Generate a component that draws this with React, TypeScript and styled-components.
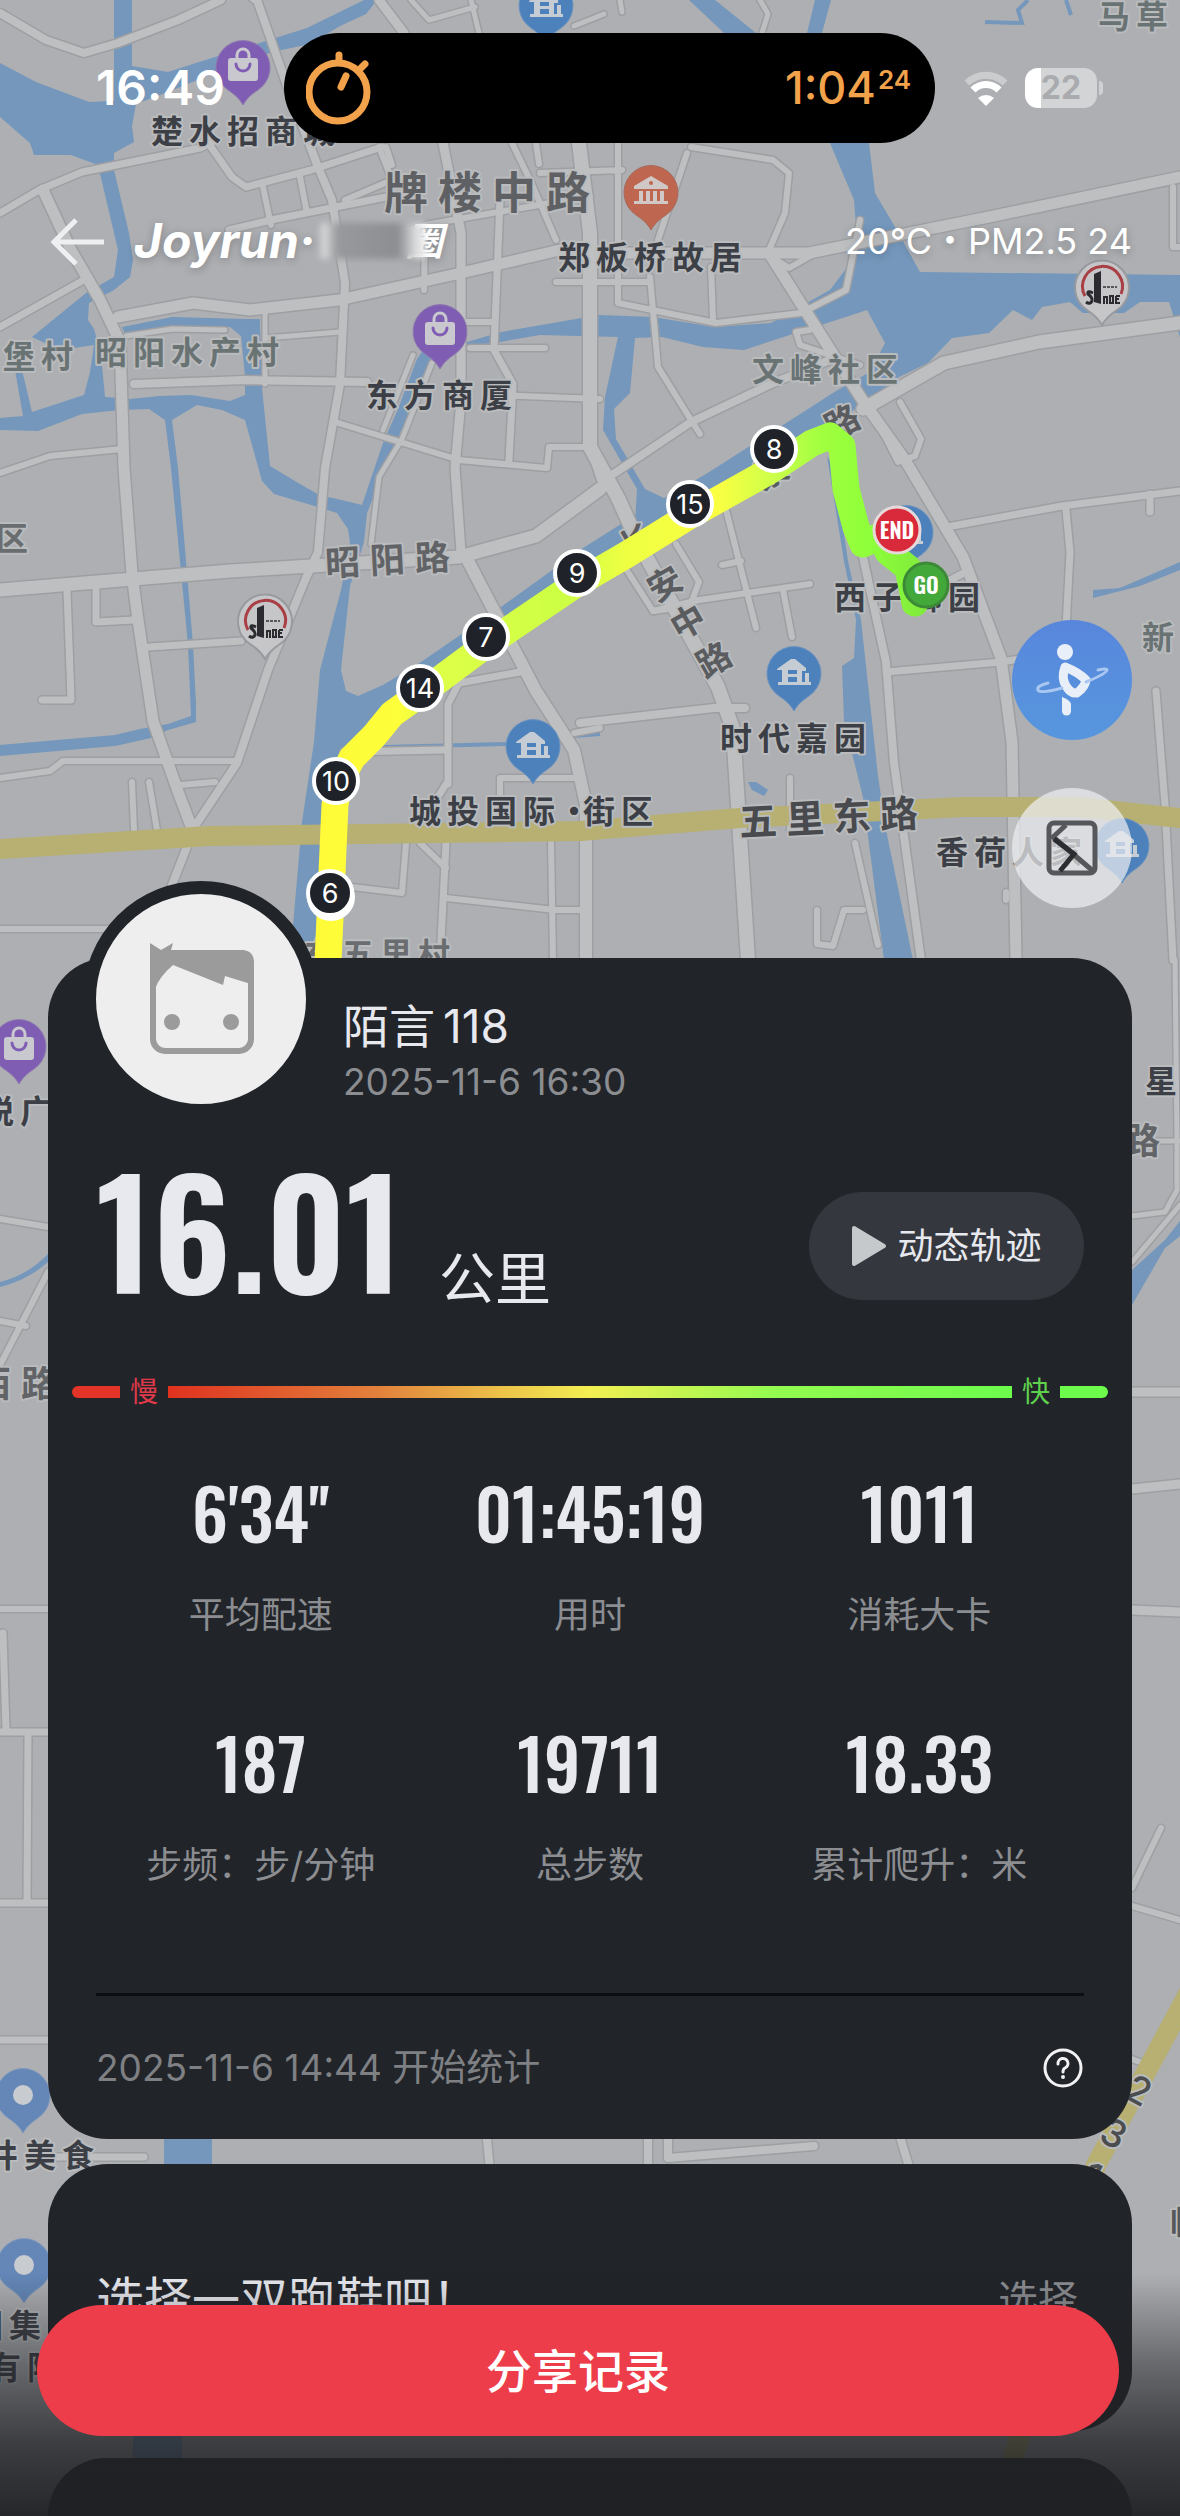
import React from 'react';
import styled, { createGlobalStyle } from 'styled-components';

const CJK = '"Noto Sans CJK SC", sans-serif';
const UI = `Inter, ${CJK}`;
const NUM = `Oswald, "Roboto Condensed", Roboto, ${CJK}`;

const C = {
  card: '#212429',
  bright: '#e8e9ef',
  muted: '#8b8d91',
  red: '#ee3d4a',
  water: '#7497bb',
  land: '#adafb3',
  road: '#bebfc0',
  casing: '#9d9fa3',
};

const Global = createGlobalStyle`
  *, *::before, *::after { box-sizing: border-box; }
  html, body { margin: 0; padding: 0; background: #26272a; }
  body { font-family: ${UI}; -webkit-font-smoothing: antialiased; }
  button { border: 0; padding: 0; margin: 0; font: inherit; color: inherit; background: none; cursor: pointer; }
  h1, h2, p, dl, dd, dt { margin: 0; font-weight: 400; }
`;

const Page = styled.div`
  position: relative;
  min-height: 100vh;
  display: flex;
  flex-direction: column;
  overflow: hidden;
  background: ${C.land};
`;

const MapCanvas = styled.svg`
  position: absolute;
  inset: 0;
  width: 100%;
  height: 100%;
  display: block;
`;

const Front = styled.div`
  position: relative;
  flex: 1;
  display: flex;
  flex-direction: column;
`;

/* ---------- status bar ---------- */

const StatusBar = styled.div`
  display: grid;
  grid-template-columns: 284px 1fr 245px;
  align-items: center;
  padding-top: 33px;
  color: #fff;
`;

const Clock = styled.time`
  padding-left: 96px;
  font-size: 48px;
  line-height: 56px;
  font-weight: 600;
`;

const Island = styled.div`
  display: flex;
  align-items: center;
  justify-content: space-between;
  height: 110px;
  padding: 0 24px 0 22px;
  border-radius: 55px;
  background: #000;
  color: #f2a24b;
`;

const Elapsed = styled.div`
  display: flex;
  align-items: flex-start;
  font-size: 45px;
  line-height: 52px;
  font-weight: 500;
`;

const Hundredths = styled.span`
  padding-left: 2px;
  font-size: 26px;
  line-height: 36px;
  font-weight: 600;
`;

const Signals = styled.div`
  display: flex;
  align-items: center;
  gap: 16px;
  padding-left: 28px;
`;

const Battery = styled.div`
  display: flex;
  align-items: center;
  justify-content: center;
  width: 72px;
  height: 40px;
  border-radius: 13px;
  background: linear-gradient(90deg, #fff 22%, #d3d4d6 22%);
  color: #a9abae;
  font-size: 32px;
  line-height: 40px;
  font-weight: 700;
`;

const BatteryWrap = styled.div`
  display: flex;
  align-items: center;
  gap: 2px;

  &::after {
    content: '';
    width: 4px;
    height: 14px;
    border-radius: 0 4px 4px 0;
    background: #cfd0d2;
  }
`;

/* ---------- navigation ---------- */

const NavBar = styled.header`
  display: flex;
  align-items: center;
  height: 126px;
  padding: 70px 48px 0 50px;
  color: #fff;
`;

const BackButton = styled.button`
  display: flex;
  align-items: center;
  width: 56px;
  height: 56px;
`;

const Brand = styled.h1`
  display: flex;
  align-items: center;
  flex: 1;
  padding-left: 28px;
  font-size: 48px;
  line-height: 56px;
  font-weight: 700;
  font-style: italic;
  text-shadow: 0 2px 8px rgba(0, 0, 0, 0.25);
`;

const Masked = styled.span`
  position: relative;
  display: flex;
  justify-content: flex-end;
  width: 122px;
  margin-left: 6px;
  font-size: 38px;
  line-height: 40px;

  &::before {
    content: '';
    position: absolute;
    left: 0;
    right: 18px;
    top: 2px;
    height: 36px;
    background: linear-gradient(90deg, #e4e5e6 0, #98999c 16%, #8d8e91 74%, #dedfe0 92%, #ececed 100%);
    filter: blur(3px);
  }
`;

const Weather = styled.p`
  font-size: 36px;
  line-height: 56px;
  text-shadow: 0 2px 8px rgba(0, 0, 0, 0.25);
`;

/* ---------- floating map tools ---------- */

const MapTools = styled.div`
  display: flex;
  flex-direction: column;
  align-items: flex-end;
  gap: 48px;
  padding: 351px 48px 50px;
`;

const RoundButton = styled.button<{ $bg: string }>`
  display: flex;
  align-items: center;
  justify-content: center;
  width: 120px;
  height: 120px;
  border-radius: 50%;
  background: ${(p) => p.$bg};
`;

/* ---------- cards ---------- */

const Card = styled.section<{ $gap?: number }>`
  margin: ${(p) => p.$gap ?? 0}px 48px 0;
  padding: 0 48px;
  border-radius: 60px;
  background: ${C.card};
  color: ${C.bright};
`;

const Profile = styled.div`
  display: flex;
  gap: 24px;
`;

const Avatar = styled.div`
  display: flex;
  align-items: center;
  justify-content: center;
  width: 236px;
  height: 236px;
  margin: -77px 0 0 -13px;
  border: 13px solid ${C.card};
  border-radius: 50%;
  background: #eee;
`;

const ProfileText = styled.div`
  padding-top: 40px;
`;

const UserName = styled.h2`
  display: flex;
  gap: 8px;
  font-size: 46px;
  line-height: 56px;
`;

const Stamp = styled.p`
  font-size: 37px;
  line-height: 56px;
  color: ${C.muted};
`;

const DistanceRow = styled.div`
  display: flex;
  align-items: flex-end;
  height: 160px;
  margin-top: 38px;
`;

const Distance = styled.strong`
  align-self: flex-start;
  font-family: ${NUM};
  font-size: 148px;
  line-height: 144px;
  font-weight: 600;
`;

const Unit = styled.span`
  flex: 1;
  padding-left: 36px;
  font-size: 56px;
  line-height: 72px;
`;

const ReplayButton = styled.button`
  display: flex;
  align-items: center;
  justify-content: center;
  gap: 10px;
  width: 275px;
  height: 108px;
  margin-bottom: 15px;
  border-radius: 54px;
  background: #34373e;
  font-size: 36px;
  line-height: 48px;
`;

const PaceScale = styled.div`
  display: flex;
  align-items: center;
  gap: 10px;
  height: 36px;
  margin: 59px -24px 0;
`;

const PaceBar = styled.span<{ $bg: string; $grow?: boolean; $radius?: string }>`
  flex: ${(p) => (p.$grow ? '1' : '0 0 48px')};
  height: 12px;
  border-radius: ${(p) => p.$radius ?? '0'};
  background: ${(p) => p.$bg};
`;

const PaceTag = styled.span<{ $color: string }>`
  font-size: 28px;
  line-height: 36px;
  color: ${(p) => p.$color};
`;

const Stats = styled.dl`
  display: grid;
  grid-template-columns: repeat(3, 1fr);
  row-gap: 82px;
  margin-top: 61px;
`;

const Stat = styled.div`
  display: flex;
  flex-direction: column-reverse;
  gap: 40px;
  text-align: center;
`;

const StatValue = styled.dd`
  font-family: ${NUM};
  font-size: 70px;
  line-height: 80px;
  font-weight: 500;
  font-kerning: none;
`;

const StatLabel = styled.dt`
  font-size: 36px;
  line-height: 48px;
  color: ${C.muted};
`;

const CardFooter = styled.div`
  display: flex;
  align-items: center;
  justify-content: space-between;
  height: 146px;
  margin-top: 104px;
  border-top: 3px solid #0c0e12;
`;

const FootNote = styled(Stamp)`
  color: #7e8084;
`;

const HelpButton = styled.button`
  width: 42px;
  height: 42px;
`;

const ShoeRow = styled.div`
  display: flex;
  align-items: center;
  justify-content: space-between;
  padding: 108px 0 103px;
  line-height: 56px;
`;

const ShoeText = styled.p`
  font-size: 48px;
`;

const ShoeButton = styled.button`
  font-size: 40px;
  color: ${C.muted};
  padding-right: 6px;
`;

const NextCard = styled.section`
  flex: 1;
  min-height: 58px;
  margin: 27px 48px 0;
  border-radius: 60px 60px 0 0;
  background: ${C.card};
`;

const ShareDock = styled.footer`
  position: fixed;
  left: 0;
  right: 0;
  bottom: 0;
  padding: 31px 61px 80px 37px;

  &::before {
    content: '';
    position: absolute;
    inset: 0;
    background: linear-gradient(
      180deg,
      rgba(32, 33, 36, 0) 0,
      rgba(32, 33, 36, 0.5) 38%,
      rgba(32, 33, 36, 0.8) 70%,
      rgba(32, 33, 36, 0.96) 100%
    );
  }
`;

const ShareButton = styled.button`
  position: relative;
  width: 100%;
  height: 131px;
  border-radius: 66px;
  background: ${C.red};
  color: #fff;
  font-size: 46px;
  line-height: 56px;
  font-weight: 500;
`;

/* ---------- map data ---------- */

const water = [
  'M114 0H132V66L168 72L218 56L307 28L364 0H377L366 14L340 26L310 44L272 52L222 70L168 92L136 104L132 126L134 142L114 153L114 170L129 233L133 260L130 277L114 290L89 303L88 320L94 329L101 355L105 397L119 398L130 399L160 396L191 395L230 401L245 395V376L241 336L230 327L172 329L126 336L122 327L172 317L245 319H260V325L262 388L270 466L300 484L321 496L333 498L362 505L383 443L398 409L417 359L430 340L448 342L436 346L425 376L390 456L367 513L364 542L350 586L341 670L346 691L358 696L383 685L421 662L501 607L580 550L640 512L706 474L794 418L836 391L870 372L885 343L867 310L846 317L805 330L744 350L703 347L662 337L635 338L630 393L614 409L616 439L645 489L668 500L635 523L637 489L603 430L605 397L618 337L540 335L500 342L440 350L501 332L599 315L653 317L714 327L771 323L830 290L858 253L854 200L830 143H869L875 193L895 227L920 272L1180 275V337L1169 302H1140L1124 313H1083L1070 302L1042 307L1032 320L1013 310L989 333L952 338L928 363L899 377L840 420L840 440L690 512L576 580L486 642L420 694L364 750L344 775L335 805L318 960H290L302 822L314 742L320 670L341 590L350 542L348 529L337 513L318 507L274 494L262 481L245 420L222 410L197 405L172 420L178 468L186 561L193 645L196 704V722L168 730L151 738L115 746L0 756V745L115 735L140 729L168 724L191 716L188 645L180 561L171 468L165 420L149 409L119 410L82 414L38 431L0 430V418L23 416L15 370L22 370L32 412L84 395L90 372L94 345L60 350L32 337L86 293L114 277L118 250L98 165L71 155H34L30 143L0 117V63L36 82L89 102L114 101Z',
  'M689 0H715L756 33H724Z',
  'M815 0H831L822 33H807Z',
  'M827 456L834 468L848 561L861 620L878 776L886 830L913 960H884L863 797L844 721L842 666L854 658L856 620L844 561Z',
  'M1093 590L1120 588L1180 562V570L1140 586L1093 598Z',
  'M748 782L756 782L768 790L764 796L752 790Z',
  'M0 1282Q28 1275 48 1254V1262Q28 1280 0 1287Z',
  'M1132 1270L1165 1240L1180 1221V1236L1165 1248L1132 1305Z',
  'M164 2100H212V2200H164Z',
  'M133 2430H182V2460H133Z',
];

const waterLines = ['M344 748L505 744L574 736L600 734', 'M985 22L1022 23L1018 10L1028 0', 'M1066 0L1071 15'];

const roads: { d: string; w: number }[] = [
  { d: 'M0 13L46 40L84 53L118 43L178 20L221 0', w: 8 },
  { d: 'M0 213L39 190L82 172L200 148L216 140', w: 7 },
  { d: 'M0 327L89 277', w: 7 },
  { d: 'M211 147L232 177L246 187L311 170L382 147', w: 7 },
  { d: 'M229 230L271 220L321 210L386 197', w: 7 },
  { d: 'M263 187L271 225M300 177L307 213M379 147L392 180L345 200M336 250L430 224L590 196', w: 6 },
  { d: 'M379 0L404 33M257 0L250 -5', w: 9 },
  { d: 'M411 0L429 20L475 7M471 0L479 33M620 0L622 12M574 26L604 14M760 0L768 14L762 33', w: 5 },
  { d: 'M536 143L539 164M425 230L424 290M386 147L392 165M512 143L530 180L556 240', w: 6 },
  { d: 'M443 143L461 233V400L455 468L461 552', w: 9 },
  { d: 'M500 200L494 350L513 384L509 460', w: 7 },
  { d: 'M467 322H494M470 348H545M497 395L600 399', w: 6 },
  { d: 'M134 384L245 380L367 382', w: 8 },
  { d: 'M265 310V384M265 338L340 332M126 336L172 329L225 330', w: 5 },
  { d: 'M335 422L459 460L547 468L549 447L589 447L600 480', w: 6 },
  { d: 'M122 449L50 456L0 473', w: 6 },
  { d: 'M413 355L383 430M432 363L402 439L379 477L371 544', w: 5 },
  { d: 'M67 590L71 700H42M96 590V622L134 620M149 647L241 641', w: 7 },
  { d: 'M0 778L50 771L63 761H237M132 782L134 830M149 782L157 830M180 785L215 782', w: 6 },
  { d: 'M0 929H120', w: 6 },
  { d: 'M448 784V704L459 683L520 672M344 752L444 750M446 784L436 800M446 843L440 960', w: 7 },
  { d: 'M344 886L402 893L406 843M446 898L555 910H586M551 843L553 960M500 800V778H574', w: 6 },
  { d: 'M420 843L446 868M574 733L600 728', w: 6 },
  { d: 'M725 506L756 628M722 565L741 561M653 611L699 600L810 584M783 590L792 637', w: 6 },
  { d: 'M626 569L653 611L690 606L699 582L676 544', w: 6 },
  { d: 'M580 723L714 708L745 708', w: 8 },
  { d: 'M691 147L773 160L789 173L785 213L769 250M687 153L658 240M540 173L622 170M618 143V283', w: 6 },
  { d: 'M556 282H650M618 283V303L716 323L801 313L846 290L860 220M711 267L713 320', w: 6 },
  { d: 'M650 277L658 367L691 420L700 434M773 258L789 268L812 255M860 365L800 345L796 332L810 330', w: 6 },
  { d: 'M947 527L1062 506L1180 491M1066 510L1070 552L1066 628M1150 494V512', w: 7 },
  { d: 'M886 672L1001 662L1058 653M940 585L970 570', w: 7 },
  { d: 'M1156 691L1165 805L1173 960', w: 7 },
  { d: 'M871 409L898 462L915 456L921 439L900 402', w: 6 },
  { d: 'M855 843L878 945M817 910V944L833 946L844 910H863M790 778V830', w: 6 },
  { d: 'M1173 187V247H1180M1006 892V900', w: 6 },
  { d: 'M863 557L886 662L894 763L921 960', w: 8 },
  { d: 'M257 0L286 83L318 167L332 200L345 283L340 384L325 468L318 552L306 578L268 670L237 763L195 826L172 885', w: 8 },
  { d: 'M43 190L71 250L100 300L120 342L124 468L132 574L138 620L153 721L180 797L191 826', w: 11 },
  { d: 'M118 317L193 303L250 310L339 300L461 273L560 250L597 253H809L989 217L1180 177', w: 11 },
  { d: 'M600 489L603 481L691 422L771 384L830 360', w: 8 },
  { d: 'M0 590L230 571L459 557L536 536L600 489', w: 13 },
  { d: 'M466 557L536 691L574 750L586 805V960', w: 12 },
  { d: 'M579 143L590 233V447L618 498L637 540L718 687L733 729L748 960', w: 14 },
  { d: 'M769 253L805 310L863 401L905 460L963 557L1001 658L1012 742L1016 960', w: 11 },
  { d: 'M863 409L944 363L1039 342L1180 323', w: 13 },
  { d: 'M0 1219L48 1227M0 1321L26 1326M48 1272L0 1365M0 1609H48', w: 6 },
  { d: 'M3 1633L6 1730M0 1732H48M28 1732L27 1903M0 1903H48M0 2040H48M48 2157H144', w: 7 },
  { d: 'M1175 960L1177 1140M1132 1141H1180M1132 1216L1165 1212L1177 1190V1141M1132 1262L1180 1205', w: 5 },
  { d: 'M1132 1392H1180M1132 1489L1180 1484M1132 1610L1180 1612', w: 9 },
  { d: 'M1132 1888L1161 1828M1132 1906L1180 1920M1120 2055L1140 2062', w: 6 },
  { d: 'M486 2130L490 2170M648 2130V2170M668 2130V2158L814 2146M898 2130L910 2170', w: 8 },
];

const highways = ['M0 849L210 836L580 831L740 818L963 807H1078L1180 818', 'M1193 1985L1096 2165L1010 2470'];

const labels: { t: string; x: number; y: number; s?: number; gap?: number; c?: string; r?: number }[] = [
  { t: '楚水招商城', x: 151, y: 131 },
  { t: '郑板桥故居', x: 558, y: 257 },
  { t: '东方商厦', x: 366, y: 395 },
  { t: '时代嘉园', x: 720, y: 738 },
  { t: '西子御园', x: 834, y: 597 },
  { t: '香荷人家', x: 936, y: 852 },
  { t: '城投国际', x: 409, y: 811 },
  { t: '·', x: 558, y: 811 },
  { t: '街区', x: 583, y: 811 },
  { t: '牌楼中路', x: 384, y: 193, s: 44, gap: 10, c: '#5e6063' },
  { t: '昭阳路', x: 325, y: 563, s: 35, gap: 10, c: '#616366', r: -3 },
  { t: '五里东路', x: 739, y: 822, s: 38, gap: 9, c: '#484a4e', r: -3 },
  { t: '昭阳水产村', x: 95, y: 352, c: '#6a7373' },
  { t: '堡村', x: 3, y: 356, c: '#6a7373' },
  { t: '文峰社区', x: 752, y: 369, c: '#6a7373' },
  { t: '区', x: -4, y: 538, c: '#6a6d70' },
  { t: '新', x: 1142, y: 637, c: '#6a7373' },
  { t: '马草', x: 1098, y: 16, c: '#6a7373' },
  { t: '长', x: 622, y: 550, s: 34, c: '#5a5c60', r: -30 },
  { t: '安', x: 650, y: 592, s: 34, c: '#5a5c60', r: -30 },
  { t: '中', x: 673, y: 630, s: 34, c: '#5a5c60', r: -30 },
  { t: '路', x: 699, y: 668, s: 34, c: '#5a5c60', r: -30 },
  { t: '景', x: 756, y: 480, s: 34, c: '#5a5c60', r: -28 },
  { t: '路', x: 827, y: 430, s: 34, c: '#5a5c60', r: -28 },
  { t: '东五里村', x: 304, y: 954, c: '#6a6d70' },
  { t: '悦广', x: -18, y: 1111 },
  { t: '西路', x: -25, y: 1384, s: 36, gap: 10, c: '#616366' },
  { t: '星', x: 1145, y: 1081 },
  { t: '路', x: 1124, y: 1141, s: 36, c: '#616366' },
  { t: '井美食', x: -14, y: 2155 },
  { t: '团集', x: -29, y: 2325 },
  { t: '有限', x: -11, y: 2367 },
  { t: '临', x: 1170, y: 2222, c: '#55575b' },
];

const routeNumber = [
  { n: 2, x: 1139, y: 2090 },
  { n: 3, x: 1114, y: 2133 },
  { n: 1, x: 1092, y: 2176 },
];

const kilometres = [
  { n: 6, x: 330, y: 893 },
  { n: 10, x: 336, y: 781 },
  { n: 14, x: 420, y: 688 },
  { n: 7, x: 486, y: 637 },
  { n: 9, x: 577, y: 573 },
  { n: 15, x: 690, y: 504 },
  { n: 8, x: 774, y: 449 },
];

const MapLabel = styled.text<{ $size: number; $gap: number; $color: string }>`
  font-family: ${CJK};
  font-size: ${(p) => p.$size}px;
  letter-spacing: ${(p) => p.$gap}px;
  font-weight: 700;
  fill: ${(p) => p.$color};
  stroke: #b9bbbd;
  stroke-width: 4px;
  stroke-linejoin: round;
  paint-order: stroke;
`;

const RoadNumber = styled.text`
  font-family: ${UI};
  font-size: 38px;
  font-weight: 500;
  fill: #4c4d4e;
  stroke: #b9bbbd;
  stroke-width: 4px;
  stroke-linejoin: round;
  paint-order: stroke;
  text-anchor: middle;
`;

const KmText = styled.text`
  font-family: ${UI};
  font-size: 27px;
  font-weight: 400;
  fill: #fff;
  text-anchor: middle;
`;

const FlagText = styled.text`
  font-family: ${NUM};
  font-size: 22px;
  font-weight: 600;
  fill: #fff;
  text-anchor: middle;
`;

const drop = 'M0 38C-4 31 -9 27 -15 23A27 27 0 1 1 15 23C9 27 4 31 0 38Z';

const ShopPin = ({ x, y }: { x: number; y: number }) => (
  <g transform={`translate(${x} ${y})`}>
    <path d={drop} fill="#7f5db3" stroke="#8f7bb0" strokeWidth="1" />
    <rect x="-15" y="-9" width="30" height="23" rx="3" fill="#c9c8cf" />
    <path d="M-6 -9V-12A6 6 0 0 1 6 -12V-9" fill="none" stroke="#c9c8cf" strokeWidth="3" />
    <path d="M-7 -3A7 7 0 0 0 7 -3" fill="none" stroke="#7f5db3" strokeWidth="3" strokeLinecap="round" />
  </g>
);

const HousePin = ({ x, y }: { x: number; y: number }) => (
  <g transform={`translate(${x} ${y})`}>
    <path d={drop} fill="#4d81bb" stroke="#6c93bf" strokeWidth="1" />
    <path
      d="M-17 -4L-3 -14L1 -14L12 -5V-2H8V9H11V0H15V9H17V12H-16V9H-12V-3H-17ZM-6 -3V1H3V-3ZM-6 4V9H3V4Z"
      fillRule="evenodd"
      fill="#c5ccd4"
    />
  </g>
);

const MuseumPin = ({ x, y }: { x: number; y: number }) => (
  <g transform={`translate(${x} ${y})`}>
    <path d={drop} fill="#bf6650" stroke="#a66a5c" strokeWidth="1" />
    <path
      d="M0 -16L17 -6V-3H-17V-6ZM-12 -1H-8V9H-12ZM-5 -1H-1V9H-5ZM2 -1H6V9H2ZM9 -1H13V9H9ZM-17 9H17V12H-17Z"
      fill="#cfc8c6"
    />
    <circle cy="-9" r="2" fill="#bf6650" />
  </g>
);

const PlacePin = ({ x, y }: { x: number; y: number }) => (
  <g transform={`translate(${x} ${y})`}>
    <path d={drop} fill="#6487b8" stroke="#7f98bd" strokeWidth="1" />
    <circle r="10" fill="#c8cbcf" />
  </g>
);

const FuelPin = ({ x, y }: { x: number; y: number }) => (
  <g transform={`translate(${x} ${y})`}>
    <path d={drop} fill="#c6c5c8" stroke="#979a9e" strokeWidth="2" />
    <path d="M-17 9A20 20 0 1 1 19 7" fill="none" stroke="#a93f45" strokeWidth="3" />
    <path d="M-8 -13L-1 -16V17L-8 15Z" fill="#2c2c30" />
    <path d="M-9 6Q-15 3 -14 7Q-9 11 -10 14Q-12 18 -16 15" fill="none" stroke="#2c2c30" strokeWidth="3" />
    <path d="M2 9V17M2 10H5V17M8 9H11V16H8ZM14 9V16H18M14 9H18M14 12H17" fill="none" stroke="#2c2c30" strokeWidth="2" />
    <path d="M1 0H15" stroke="#55555a" strokeWidth="2" strokeDasharray="3 1" />
  </g>
);

const RouteMap = () => (
  <MapCanvas viewBox="0 0 1180 2516" preserveAspectRatio="xMidYMin slice" role="img" aria-label="跑步轨迹地图">
    <defs>
      <linearGradient id="track" gradientUnits="userSpaceOnUse" x1="320" y1="0" x2="930" y2="0">
        <stop offset="0" stopColor="#fffb38" />
        <stop offset="0.13" stopColor="#fdff3a" />
        <stop offset="0.18" stopColor="#e0ff48" />
        <stop offset="0.4" stopColor="#ccff44" />
        <stop offset="0.5" stopColor="#eeff42" />
        <stop offset="0.65" stopColor="#fbff42" />
        <stop offset="0.76" stopColor="#c4ff4a" />
        <stop offset="0.82" stopColor="#a2ff40" />
        <stop offset="0.9" stopColor="#8eff3a" />
        <stop offset="1" stopColor="#7fe83c" />
      </linearGradient>
    </defs>
    <rect width="1180" height="2516" fill={C.land} />
    {water.map((d) => (
      <path key={d} d={d} fill={C.water} />
    ))}
    {waterLines.map((d) => (
      <path key={d} d={d} fill="none" stroke={C.water} strokeWidth="4" />
    ))}
    <g fill="none" strokeLinecap="round" strokeLinejoin="round">
      {roads.map((r) => (
        <path key={r.d} d={r.d} stroke={C.casing} strokeWidth={r.w + 3} />
      ))}
      {roads.map((r) => (
        <path key={r.d} d={r.d} stroke={C.road} strokeWidth={r.w} />
      ))}
      {highways.map((d) => (
        <path key={d} d={d} stroke="#b7b072" strokeWidth="20" />
      ))}
    </g>

    {labels.map((l) => (
      <MapLabel
        key={l.t + l.x}
        $size={l.s ?? 32}
        $gap={l.gap ?? 6}
        $color={l.c ?? '#3c3f46'}
        transform={`translate(${l.x} ${l.y}) rotate(${l.r ?? 0})`}
        y={(l.s ?? 32) * 0.37}
      >
        {l.t}
      </MapLabel>
    ))}
    {routeNumber.map((r) => (
      <RoadNumber key={r.n} transform={`translate(${r.x} ${r.y}) rotate(28)`} y="14">
        {r.n}
      </RoadNumber>
    ))}

    <ShopPin x={243} y={67} />
    <ShopPin x={440} y={331} />
    <ShopPin x={19} y={1046} />
    <MuseumPin x={651} y={192} />
    <HousePin x={546} y={5} />
    <HousePin x={533} y={746} />
    <HousePin x={794} y={673} />
    <HousePin x={906} y={532} />
    <HousePin x={1122} y={845} />
    <FuelPin x={265} y={621} />
    <FuelPin x={1102} y={287} />
    <PlacePin x={23} y={2095} />
    <PlacePin x={24} y={2265} />

    <path
      d="M328 962L335 805L338 785L352 758L374 736L392 714L420 694L486 645L576 584L626 555L689 516L771 470L812 443L830 436L842 446L846 489L856 527L863 544L880 536L888 552L908 568L915 603"
      fill="none"
      stroke="url(#track)"
      strokeWidth="27"
      strokeLinejoin="round"
      strokeLinecap="round"
    />
    <circle cx="331" cy="897" r="24" fill="#fff" />
    {kilometres.map((k) => (
      <g key={k.n} transform={`translate(${k.x} ${k.y})`}>
        <circle r="22" fill="#1f2228" stroke="#fff" strokeWidth="4" />
        <KmText y="10">{k.n}</KmText>
      </g>
    ))}
    <g transform="translate(926 585)">
      <circle r="22" fill="#43a83a" stroke="#3c8a37" strokeWidth="3" />
      <FlagText y="9">GO</FlagText>
    </g>
    <g transform="translate(897 530)">
      <circle r="23" fill="#d92a3c" stroke="#e6d9da" strokeWidth="3" />
      <FlagText y="9">END</FlagText>
    </g>
  </MapCanvas>
);

const stats = [
  { label: '平均配速', value: "6'34''" },
  { label: '用时', value: '01:45:19' },
  { label: '消耗大卡', value: '1011' },
  { label: '步频：步/分钟', value: '187' },
  { label: '总步数', value: '19711' },
  { label: '累计爬升：米', value: '18.33' },
];

export default function App() {
  return (
    <Page>
      <Global />
      <RouteMap />
      <Front>
        <StatusBar>
          <Clock>16:49</Clock>
          <Island>
            <svg width="66" height="74" viewBox="0 0 66 74" fill="none" stroke="#f2a24b" strokeLinecap="round">
              <circle cx="32" cy="41" r="29" strokeWidth="7" />
              <path d="M33 4V11M55 17L59 13" strokeWidth="7" />
              <path d="M35 36L40 25" strokeWidth="7" />
            </svg>
            <Elapsed>
              1:04<Hundredths>24</Hundredths>
            </Elapsed>
          </Island>
          <Signals>
            <svg width="46" height="36" viewBox="0 0 46 36" fill="none">
              <path d="M4 13A27 27 0 0 1 42 13" stroke="#cbccce" strokeWidth="7" />
              <path d="M10 20A18 18 0 0 1 36 20" stroke="#fff" strokeWidth="7" />
              <path d="M23 36L15 28A12 12 0 0 1 31 28Z" fill="#fff" />
            </svg>
            <BatteryWrap>
              <Battery>22</Battery>
            </BatteryWrap>
          </Signals>
        </StatusBar>

        <NavBar>
          <BackButton aria-label="返回">
            <svg width="56" height="48" viewBox="0 0 56 48" fill="none" stroke="#eeeff0" strokeWidth="5">
              <path d="M54 25H4M26 3L4 25L26 47" />
            </svg>
          </BackButton>
          <Brand>
            <span>Joyrun</span>
            <span>·</span>
            <Masked>圈</Masked>
          </Brand>
          <Weather>20°C・PM2.5 24</Weather>
        </NavBar>

        <MapTools>
          <RoundButton $bg="linear-gradient(180deg, #5886dc, #5797de)" aria-label="运动姿态">
            <svg width="76" height="76" viewBox="0 0 76 76" fill="none">
              <circle cx="31" cy="10" r="8" fill="#e9eff8" />
              <path d="M31 25Q27 36 32 44Q37 52 43 51Q51 45 52 38Q44 30 31 25Z" stroke="#e9eff8" strokeWidth="9" strokeLinejoin="round" />
              <path d="M28 55Q36 58 37 62V69A4 4 0 0 1 28 69Z" fill="#e9eff8" />
              <path d="M28 46Q6 52 4 48Q2 44 14 41M52 40Q72 32 73 28Q73 26 64 28" stroke="#a9c7f0" strokeWidth="3" strokeLinecap="round" />
            </svg>
          </RoundButton>
          <RoundButton $bg="rgba(236, 237, 240, 0.72)" aria-label="隐藏地图">
            <svg width="52" height="56" viewBox="0 0 52 56" fill="none" stroke="#55575b" strokeWidth="5">
              <rect x="3" y="3" width="46" height="50" rx="5" />
              <path d="M6 18L20 5M6 16L47 51" />
              <path d="M8 19L28 34L14 51" stroke="#2c2d30" />
            </svg>
          </RoundButton>
        </MapTools>

        <Card>
          <Profile>
            <Avatar>
              <svg width="108" height="112" viewBox="0 0 108 112">
                <rect x="6" y="10" width="98" height="98" rx="12" fill="#eee" stroke="#9b9b9b" strokeWidth="6" />
                <path d="M3 0L14 7L26 0L24 7H96Q107 8 107 20V42L78 33L76 42L26 22Q12 34 8 46H3Z" fill="#9b9b9b" />
                <circle cx="25" cy="79" r="8" fill="#9b9b9b" />
                <circle cx="84" cy="79" r="8" fill="#9b9b9b" />
              </svg>
            </Avatar>
            <ProfileText>
              <UserName>
                <span>陌言</span>
                <span>118</span>
              </UserName>
              <Stamp>2025-11-6 16:30</Stamp>
            </ProfileText>
          </Profile>

          <DistanceRow>
            <Distance>16.01</Distance>
            <Unit>公里</Unit>
            <ReplayButton>
              <svg width="36" height="42" viewBox="0 0 36 42">
                <path d="M3 3L33 21L3 39Z" fill="#c6c9cb" stroke="#c6c9cb" strokeWidth="4" strokeLinejoin="round" />
              </svg>
              动态轨迹
            </ReplayButton>
          </DistanceRow>

          <PaceScale>
            <PaceBar $bg="#e23428" $radius="6px 0 0 6px" />
            <PaceTag $color="#e0394a">慢</PaceTag>
            <PaceBar $grow $bg="linear-gradient(90deg, #e0321f, #e2823c 25%, #f3f052 50%, #93fb50 72%, #6dfb4c)" />
            <PaceTag $color="#5fd04c">快</PaceTag>
            <PaceBar $bg="#6dfb4c" $radius="0 6px 6px 0" />
          </PaceScale>

          <Stats>
            {stats.map((s) => (
              <Stat key={s.label}>
                <StatLabel>{s.label}</StatLabel>
                <StatValue>{s.value}</StatValue>
              </Stat>
            ))}
          </Stats>

          <CardFooter>
            <FootNote>2025-11-6 14:44 开始统计</FootNote>
            <HelpButton aria-label="帮助">
              <svg width="42" height="42" viewBox="0 0 42 42" fill="none" stroke="#f2f2f4" strokeWidth="3" strokeLinecap="round">
                <circle cx="21" cy="21" r="18" />
                <path d="M16 17A5 5 0 1 1 23 21Q21 22 21 25" />
                <circle cx="21" cy="30" r="1" fill="#f2f2f4" strokeWidth="2" />
              </svg>
            </HelpButton>
          </CardFooter>
        </Card>

        <Card $gap={25}>
          <ShoeRow>
            <ShoeText>选择一双跑鞋吧！</ShoeText>
            <ShoeButton>选择</ShoeButton>
          </ShoeRow>
        </Card>

        <NextCard />
      </Front>

      <ShareDock>
        <ShareButton>分享记录</ShareButton>
      </ShareDock>
    </Page>
  );
}
